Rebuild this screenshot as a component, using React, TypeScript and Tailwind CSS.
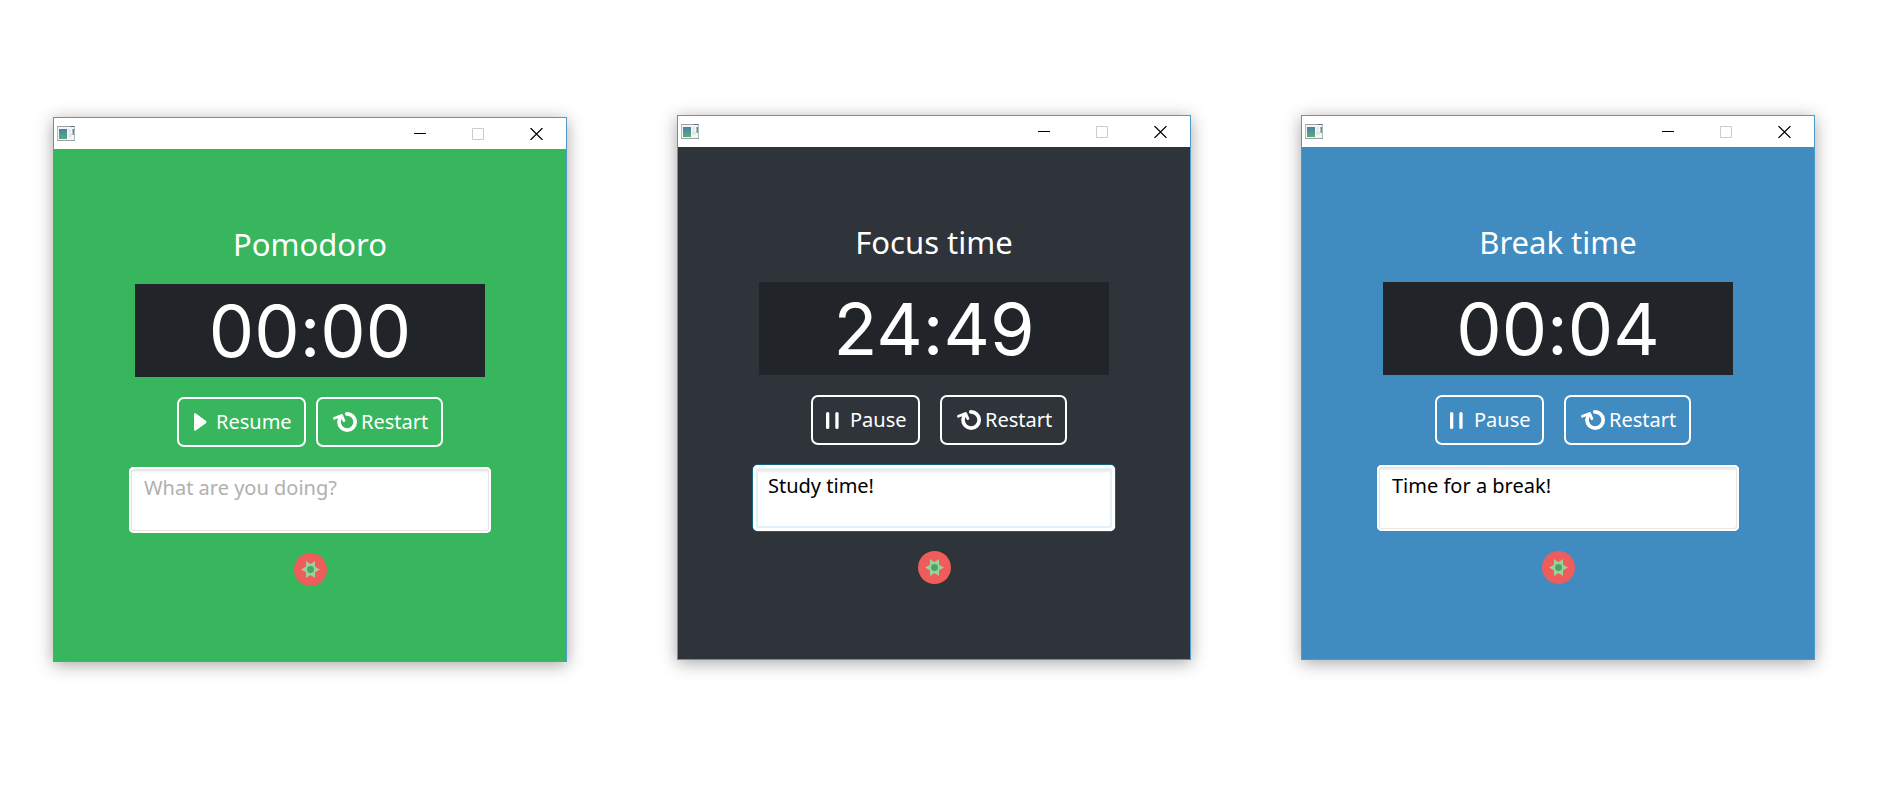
import React from "react";

type Session = {
  title: string;
  time: string;
  running: boolean;
  note: string;
  frame: string;
  body: string;
  field: string;
};

const sessions: Session[] = [
  {
    title: "Pomodoro",
    time: "00:00",
    running: false,
    note: "",
    frame: "mt-0.5",
    body: "bg-[#37b65d]",
    field: "shadow-[inset_0_0_0_2px_#fff,inset_0_0_0_3px_#e6e6e6,inset_0_4px_3px_#dcdcdc]",
  },
  {
    title: "Focus time",
    time: "24:49",
    running: true,
    note: "Study time!",
    frame: "",
    body: "bg-[#2f333a]",
    field:
      "shadow-[0_0_0_1px_#14627f,inset_0_0_0_3px_#fff,inset_0_0_0_5px_#dff2f9,inset_0_6px_3px_#dcdcdc]",
  },
  {
    title: "Break time",
    time: "00:04",
    running: true,
    note: "Time for a break!",
    frame: "",
    body: "bg-[#408bbf]",
    field: "shadow-[inset_0_0_0_2px_#fff,inset_0_0_0_3px_#e6e6e6,inset_0_4px_3px_#dcdcdc]",
  },
];

function AppIcon() {
  return (
    <svg width="19" height="16" viewBox="0 0 19 16" aria-hidden="true">
      <defs>
        <linearGradient id="pane" x1="0" y1="0" x2="0" y2="1">
          <stop offset="0" stopColor="#4a7fa5" />
          <stop offset="1" stopColor="#5bab7c" />
        </linearGradient>
      </defs>
      <rect x="0.5" y="0.5" width="17" height="14" fill="#f4f5f6" stroke="#b4b9be" />
      <path d="M0 .5h18M0 14.5h18" stroke="#9aa1a8" />
      <path d="M13 .5h4" stroke="#5f7183" />
      <rect x="2" y="3" width="8" height="10" fill="url(#pane)" />
      <rect x="11" y="3" width="3" height="3" fill="#e4e6e8" />
      <rect x="11" y="7" width="4" height="4" fill="#e4e6e8" />
      <rect x="15.500" y="3" width="1.500" height="6" fill="url(#pane)" />
    </svg>
  );
}

function PlayIcon() {
  return (
    <svg width="13" height="18" viewBox="0 0 13 18" fill="#fff" aria-hidden="true">
      <path d="M0 1.6C0 .4 1.2 0 2.2.7L11.8 7.8c.9.7.9 1.7 0 2.4L2.2 17.3C1.2 18 0 17.6 0 16.4z" />
    </svg>
  );
}

function PauseIcon() {
  return (
    <svg width="13" height="17" viewBox="0 0 13 17" fill="#fff" aria-hidden="true">
      <rect width="3.300" height="17" rx="1.5" />
      <rect x="9.300" width="3.300" height="17" rx="1.5" />
    </svg>
  );
}

function RestartIcon() {
  return (
    <svg width="25" height="20" viewBox="0 0 25 20" fill="none" stroke="#fff" strokeLinecap="round" aria-hidden="true">
      <path d="M13.800 1.900A8.100 8.100 0 1 1 6 10C5.900 8 6.700 6.200 8 4.700" strokeWidth="3.700" />
      <path d="M1.400 6.300L8.600 3.400L10.900 8.600" strokeWidth="2.700" strokeLinejoin="round" />
    </svg>
  );
}

function TomatoIcon() {
  return (
    <svg width="33" height="33" viewBox="0 0 33 33" aria-hidden="true">
      <circle cx="16.500" cy="16.500" r="16.500" fill="#ee5c5c" />
      <path
        d="M7 16.500L11.900 13.800L12 8L16.500 11.100L21 8L21.100 13.800L26 16.500L21.100 19.200L21 25L16.500 21.900L12 25L11.900 19.200Z"
        fill="#9bd09b"
      />
      <circle cx="16.500" cy="16.500" r="3.400" fill="#4ba564" />
    </svg>
  );
}

function TitleBar() {
  return (
    <header className="flex h-[31px] items-center justify-between bg-white pl-[3px] pr-[23px]">
      <AppIcon />
      <div className="flex items-center gap-[46px]">
        <button type="button" aria-label="Minimize">
          <svg className="block" width="12" height="12" viewBox="0 0 12 12" stroke="#000">
            <path d="M0 5.500h12" />
          </svg>
        </button>
        <button type="button" aria-label="Maximize" disabled>
          <svg className="block" width="12" height="12" viewBox="0 0 12 12" fill="none" stroke="#ccc">
            <path d="M.5.500h11v11H.5z" />
          </svg>
        </button>
        <button type="button" aria-label="Close">
          <svg className="block" width="13" height="12" viewBox="0 0 13 12" stroke="#000" strokeWidth="1.200">
            <path d="M.5 0l12 12M12.500 0L.5 12" />
          </svg>
        </button>
      </div>
    </header>
  );
}

const buttonClass =
  "flex h-[50px] items-center rounded-[7px] border-2 border-white text-xl leading-7 text-white";

function TimerWindow({ session }: { session: Session }) {
  return (
    <section
      className={`w-[514px] shrink-0 border border-[#4f9ac8] shadow-[0_3px_16px_rgba(0,0,0,0.35)] ${session.frame}`}
    >
      <TitleBar />
      <div className={`flex flex-col items-center gap-5 py-[75px] ${session.body}`}>
        <h1 className="text-[31px] leading-10 text-white">{session.title}</h1>
        <div className="flex h-[93px] w-[350px] items-center justify-center bg-[#212429] font-['Inter',sans-serif] text-[72px] leading-none text-white [font-variant-ligatures:no-contextual]">
          {session.time}
        </div>
        <div className="flex gap-2.5">
          <div className="flex w-[129px] justify-center">
            {session.running ? (
              <button type="button" className={`${buttonClass} w-[109px] gap-[11px] pl-[13px]`}>
                <PauseIcon />
                Pause
              </button>
            ) : (
              <button type="button" className={`${buttonClass} w-[129px] gap-[9px] pl-[15px]`}>
                <PlayIcon />
                Resume
              </button>
            )}
          </div>
          <button type="button" className={`${buttonClass} w-[127px] gap-[3px] pl-[15px]`}>
            <RestartIcon />
            Restart
          </button>
        </div>
        <textarea
          aria-label="What are you doing?"
          placeholder="What are you doing?"
          defaultValue={session.note}
          className={`block h-[66px] w-[362px] resize-none overflow-hidden rounded-[5px] bg-white px-[15px] py-[7px] text-xl leading-7 text-black outline-none placeholder:text-[#b0b0b0] ${session.field}`}
        />
        <TomatoIcon />
      </div>
    </section>
  );
}

export default function App() {
  return (
    <main className="flex min-h-screen items-start gap-[110px] bg-white pl-[53px] pt-[115px] font-['Noto_Sans',sans-serif]">
      {sessions.map((session) => (
        <TimerWindow key={session.title} session={session} />
      ))}
    </main>
  );
}
